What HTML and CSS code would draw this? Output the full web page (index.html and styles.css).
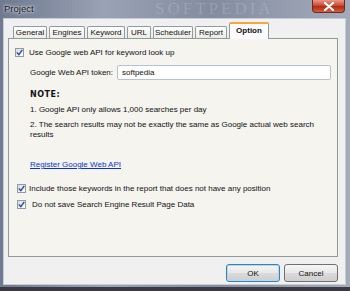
FILE: index.html
```html
<!DOCTYPE html>
<html lang="en">
<head>
  <meta charset="UTF-8">
  <title>Project</title>
  <link rel="stylesheet" href="styles.css">
</head>
<body>
  <div class="window">
    <!-- Title bar -->
    <div class="titlebar">
      <span class="title">Project</span>
      <span class="watermark">SOFTPEDIA</span>
      <span class="close-btn">
        <svg width="12" height="9" viewBox="0 0 12 9"><path d="M2 1 L10 8 M10 1 L2 8" stroke="#fff" stroke-width="2.2" stroke-linecap="round"/></svg>
      </span>
    </div>
    <!-- Client area -->
    <div class="client">
      <div class="tabs">
        <span class="tab w-general">General</span>
        <span class="tab w-engines">Engines</span>
        <span class="tab w-keyword">Keyword</span>
        <span class="tab w-url">URL</span>
        <span class="tab w-sched">Scheduler</span>
        <span class="tab w-report">Report</span>
        <span class="tab active w-option">Option</span>
      </div>
      <div class="page">
        <label class="check-row first">
          <span class="checkbox"><svg width="7" height="7" viewBox="0 0 7 7"><path d="M0.8 3.4 L2.8 5.6 L6.3 0.8" fill="none" stroke="#2146a8" stroke-width="1.4"/></svg></span>
          Use Google web API for keyword look up
        </label>
        <div class="token-row">
          <span class="token-label">Google Web API token:</span>
          <span class="textbox">softpedia</span>
        </div>
        <div class="note-title">NOTE:</div>
        <p class="note">1. Google API only allows 1,000 searches per day</p>
        <p class="note two">2. The search results may not be exactly the same as Google actual web search results</p>
        <a class="link" href="#">Register Google Web API</a>
        <label class="check-row include">
          <span class="checkbox"><svg width="7" height="7" viewBox="0 0 7 7"><path d="M0.8 3.4 L2.8 5.6 L6.3 0.8" fill="none" stroke="#2146a8" stroke-width="1.4"/></svg></span>
          Include those keywords in the report that does not have any position
        </label>
        <label class="check-row nosave">
          <span class="checkbox"><svg width="7" height="7" viewBox="0 0 7 7"><path d="M0.8 3.4 L2.8 5.6 L6.3 0.8" fill="none" stroke="#2146a8" stroke-width="1.4"/></svg></span>
          Do not save Search Engine Result Page Data
        </label>
      </div>
      <div class="buttons">
        <button class="btn default">OK</button>
        <button class="btn">Cancel</button>
      </div>
    </div>
  </div>
</body>
</html>
```

FILE: styles.css
```css
html, body { margin: 0; padding: 0; }
body {
  width: 350px; height: 291px; overflow: hidden;
  background: #3b3a44;
  font-family: 'Liberation Sans', Arial, sans-serif;
  font-size: 8px; color: #111;
}
/* Window frame */
.window {
  width: 350px; height: 287px;
  background: linear-gradient(90deg, #6f798f 0%, #9aa3b5 30%, #838ca0 60%, #a3abbb 100%);
  display: flex; flex-direction: column;
  box-sizing: border-box;
  padding: 0 4px 2px 3px;
}
.titlebar {
  height: 18px;
  display: flex; align-items: flex-start;
  position: relative;
  overflow: hidden;
}
.title {
  font-size: 9.5px; color: #14141c;
  margin: 3px 0 0 1px;
  text-shadow: 0 0 4px #e8ecf4, 0 0 2px #e8ecf4;
}
.watermark {
  position: absolute; left: 152px; top: 0;
  font-family: 'Liberation Serif', serif; font-size: 17px; letter-spacing: 3px;
  line-height: 18px;
  color: rgba(255,255,255,0.16);
}
.close-btn {
  margin-left: auto; margin-right: 1px;
  width: 33px; height: 13px;
  border: 1px solid #6b2b24; border-top: none;
  border-radius: 0 0 4px 4px;
  background: linear-gradient(#e29a8a 0%, #cf4a33 45%, #b32a12 55%, #d4603f 100%);
  display: flex; align-items: center; justify-content: center;
  box-sizing: border-box;
}
/* Client */
.client {
  flex: 1;
  background: #f0f0f0;
  border: 1px solid #c8ccd4;
  display: flex; flex-direction: column;
  padding: 0 0 0 4px;
}
.tabs {
  display: flex; align-items: flex-end;
  height: 19px;
  padding-left: 5px;
}
.tab {
  height: 12px;
  box-sizing: border-box;
  border: 1px solid #919b9c; border-bottom: none;
  border-radius: 2px 2px 0 0;
  background: linear-gradient(#ffffff, #ecebe6);
  display: flex; align-items: center; justify-content: center;
  margin-right: 2px;
  line-height: 1;
}
.tab.active {
  height: 17px;
  background: #fcfcfe;
  border-top: 2px solid #f5a83a;
  font-weight: bold;
  margin-bottom: -1px;
  position: relative; z-index: 1;
  padding-bottom: 2px;
}
.w-general { width: 34px; }
.w-engines { width: 36px; }
.w-keyword { width: 38px; }
.w-url { width: 24px; }
.w-sched { width: 40px; }
.w-report { width: 32px; }
.w-option { width: 40px; }
.page {
  width: 330px; height: 219px;
  box-sizing: border-box;
  border: 1px solid #919b9c;
  background: #f5f4ef;
  padding: 9px 0 0 6px;
  display: flex; flex-direction: column;
}
.check-row { display: flex; align-items: center; gap: 5px; }
.checkbox {
  width: 9px; height: 9px; box-sizing: border-box;
  border: 1px solid #8f9ba6;
  background: linear-gradient(135deg, #dcdcd6, #fff);
  display: flex; align-items: center; justify-content: center;
}
.token-row { display: flex; align-items: center; margin: 8px 0 0 15px; }
.token-label { width: 87px; }
.textbox {
  width: 214px; height: 15px; box-sizing: border-box;
  border: 1px solid #b7c1cf; border-radius: 2px;
  background: #fff;
  padding: 0 4px; line-height: 13px;
}
.note-title {
  font-family: 'DejaVu Sans', sans-serif; font-weight: bold; font-size: 8px;
  letter-spacing: 0.5px;
  margin: 10px 0 0 15px;
}
.note { margin: 6px 0 0 15px; line-height: 10px; }
.note.two { margin-top: 5px; width: 300px; }
.link {
  color: #0a33d6; text-decoration: underline;
  margin: 20px 0 0 15px; align-self: flex-start;
}
.include { margin: 15px 0 0 2px; gap: 3px; }
.nosave { margin: 7px 0 0 2px; gap: 6px; }
/* Buttons */
.buttons {
  display: flex; justify-content: flex-end; gap: 4px;
  width: 330px;
  margin-top: 7px;
}
.btn {
  width: 54px; height: 18px;
  font-family: 'Liberation Sans', Arial, sans-serif; font-size: 8px; color: #111;
  border: 1px solid #707070; border-radius: 3px;
  background: linear-gradient(#f6f6f6 0%, #e8e8e8 48%, #dadada 52%, #cfcfcf 100%);
  padding: 0;
}
.btn.default { border-color: #3c7fb1; box-shadow: inset 0 0 0 1px #a7dbf7; }
```
